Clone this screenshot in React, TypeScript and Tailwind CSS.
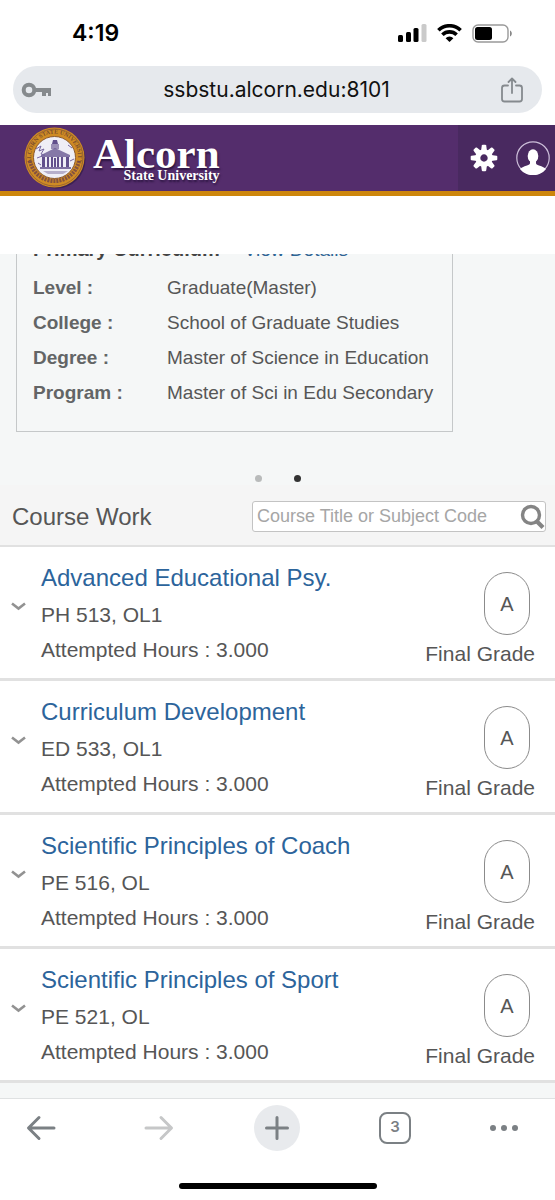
import { useState } from "react";

interface Course {
  title: string;
  code: string;
  hours: string;
  grade: string;
}

const COURSES: Course[] = [
  { title: "Advanced Educational Psy.", code: "PH 513, OL1", hours: "3.000", grade: "A" },
  { title: "Curriculum Development", code: "ED 533, OL1", hours: "3.000", grade: "A" },
  { title: "Scientific Principles of Coach", code: "PE 516, OL", hours: "3.000", grade: "A" },
  { title: "Scientific Principles of Sport", code: "PE 521, OL", hours: "3.000", grade: "A" },
];

const CURRICULUM = [
  { label: "Level", value: "Graduate(Master)" },
  { label: "College", value: "School of Graduate Studies" },
  { label: "Degree", value: "Master of Science in Education" },
  { label: "Program", value: "Master of Sci in Edu Secondary" },
];

function StatusBar() {
  return (
    <div className="flex h-[66px] items-center justify-between pr-[42px] pl-[72px] font-['Inter',sans-serif]">
      <span className="text-[23px] font-semibold text-black">4:19</span>
      <div className="flex items-center gap-[10px]">
        <svg width="29" height="18" viewBox="0 0 29 18" aria-hidden="true">
          <rect x="0" y="11" width="5" height="7" rx="1.5" />
          <rect x="8" y="8" width="5" height="10" rx="1.5" />
          <rect x="15.5" y="4" width="5" height="14" rx="1.5" />
          <rect x="23.5" y="0" width="5" height="18" rx="1.5" fill="#cacaca" />
        </svg>
        <svg width="25" height="18" viewBox="0 0 25 18" aria-hidden="true">
          <g fill="none" stroke="#000" strokeWidth="3.6">
            <path d="M1.400 6.200a16 16 0 0 1 22.200 0" />
            <path d="M5.400 10.800a10.200 10.200 0 0 1 14.200 0" />
          </g>
          <path d="M12.500 18 8.600 14.200a5.600 5.600 0 0 1 7.800 0z" />
        </svg>
        <svg width="41" height="19" viewBox="0 0 41 19" aria-hidden="true">
          <rect x="1" y="1" width="35" height="17" rx="5" fill="none" stroke="#999" strokeWidth="1.4" />
          <rect x="3" y="3" width="17" height="13" rx="2.5" />
          <path d="M38 6.500c2.400.8 2.400 5.200 0 6z" fill="#888" />
        </svg>
      </div>
    </div>
  );
}

function AddressBar() {
  return (
    <div className="mx-[13px] flex h-[47px] items-center justify-between rounded-full bg-[#e6e9ed] pr-[18px] pl-2">
      <svg width="32" height="18" viewBox="0 0 32 18" aria-hidden="true">
        <circle cx="8" cy="9" r="5.3" fill="none" stroke="#868a8d" strokeWidth="4" />
        <path d="M14 7h16v8h-3v-3h-2v3h-4v-4h-7z" fill="#868a8d" />
      </svg>
      <span className="font-['Inter',sans-serif] text-[21px] text-[#111]">ssbstu.alcorn.edu:8101</span>
      <button type="button" aria-label="Share">
        <svg
          width="24"
          height="26"
          viewBox="0 0 24 26"
          fill="none"
          stroke="#858a8e"
          strokeWidth="1.8"
          strokeLinecap="round"
          strokeLinejoin="round"
        >
          <path d="M8 8.500H4.500A2.500 2.500 0 0 0 2 11v11a2.500 2.500 0 0 0 2.500 2.500h15A2.500 2.500 0 0 0 22 22V11a2.500 2.500 0 0 0-2.500-2.500H16" />
          <path d="M12 16V2M8.500 5 12 1.500 15.500 5" />
        </svg>
      </button>
    </div>
  );
}

function Seal() {
  return (
    <svg width="62" height="62" viewBox="0 0 62 62" aria-hidden="true">
      <circle cx="32.500" cy="32.500" r="29" fill="#321b49" opacity="0.7" />
      <circle cx="30.500" cy="30.500" r="30" fill="#cf8b24" />
      <circle cx="30.500" cy="30.500" r="28.500" fill="none" stroke="#8c5b35" strokeWidth="0.8" />
      <circle cx="30.500" cy="30.500" r="21" fill="#efeef6" stroke="#8b5a2f" />
      <defs>
        <path id="seal-top" d="M7.500 35a23.500 23.500 0 1 1 46 0" />
      </defs>
      <text fontSize="6" fill="#7a4d2d" fontFamily="Liberation Serif, serif" fontWeight="bold">
        <textPath href="#seal-top" startOffset="50%" textAnchor="middle">
          ALCORN STATE UNIVERSITY
        </textPath>
      </text>
      <path d="M6 34a25 25 0 0 0 49 0" fill="none" stroke="#6b3f4a" strokeWidth="4" strokeDasharray="2 1" opacity="0.75" />
      <g fill="#62508c">
        <path d="M29 13h4l1 4h-6z" />
        <path d="M27 17h8v5h-8z" opacity="0.6" />
        <path d="M17 28 31 21l15 7v2H17z" opacity="0.75" />
        <path d="M18 30h3v10h-3zM23 30h2v10h-2zM27 30h2v10h-2zM33 30h2v10h-2zM37 30h2v10h-2zM42 30h3v10h-3z" />
        <path d="M16 40h31v2H16z" opacity="0.8" />
        <path d="M30 31h2v9h-2z" />
        <path d="M19 44h25l-5 3H24z" opacity="0.4" />
      </g>
      <path d="m12 22 5-3-2 5 5-2-3 5 4 1-8 3M44 18l4 3M46 34l4-2M14 36l3 2" fill="none" stroke="#7667a0" />
    </svg>
  );
}

function SiteHeader() {
  return (
    <header className="flex h-[71px] items-stretch justify-between border-b-[5px] border-[#cd860c] bg-[#542d6c]">
      <a href="#" aria-label="Alcorn State University" className="flex items-center gap-[7px] pl-6">
        <Seal />
        <span className="flex flex-col items-end pt-1 font-['Liberation_Serif',serif] font-bold text-white [text-shadow:1px_2px_2px_#2b1540]">
          <span className="text-[43px] leading-[31px]">Alcorn</span>
          <span className="text-[14px] leading-[14px]">State University</span>
        </span>
      </a>
      <div className="flex items-center gap-[18px] bg-[#492960] pr-[5px] pl-[12px]">
        <button type="button" aria-label="Settings">
          <svg width="28" height="28" viewBox="-14 -14 28 28" fill="#fff">
            {[0, 45, 90, 135, 180, 225, 270, 315].map((angle) => (
              <path key={angle} d="M-3-7-2.200-12.500q.2-.8 1-.8h2.400q.8 0 1 .8L3-7z" transform={`rotate(${angle})`} />
            ))}
            <circle r="6.200" fill="none" stroke="#fff" strokeWidth="5" />
          </svg>
        </button>
        <button type="button" aria-label="Profile">
          <svg width="34" height="34" viewBox="0 0 34 34">
            <circle cx="17" cy="17" r="16.200" fill="none" stroke="#cdbfda" strokeWidth="1.200" />
            <ellipse cx="17" cy="15" rx="5.300" ry="6.800" fill="#fff" />
            <path
              d="M14 19h6v3c0 1.400 1.200 1.900 3 2.500 3.500 1.100 5.700 2.200 7 3.400A16.500 16.500 0 0 1 4 27.900c1.300-1.200 3.500-2.300 7-3.400 1.800-.6 3-1.100 3-2.500z"
              fill="#fff"
            />
          </svg>
        </button>
      </div>
    </header>
  );
}

function CurriculumCard() {
  return (
    <section className="overflow-hidden bg-[#f5f7f7] pb-[3px]">
      <div className="-mt-[22px] mr-[102px] ml-4 border border-[#c5c8c9] px-4 pt-1 pb-[26px] text-[19px] leading-[25px]">
        <div className="flex gap-6">
          <h2 className="text-[20px] font-bold text-[#444]">Primary Curriculum</h2>
          <a href="#" className="text-[#2e6494]">
            View Details
          </a>
        </div>
        <dl className="pt-[3px]">
          {CURRICULUM.map((item) => (
            <div key={item.label} className="mt-[10px] flex">
              <dt className="w-[134px] shrink-0 font-bold text-[#636566]">{item.label} :</dt>
              <dd className="whitespace-nowrap">{item.value}</dd>
            </div>
          ))}
        </dl>
      </div>
      <div className="mt-[43px] flex justify-center gap-8">
        <button type="button" aria-label="Slide 1" className="size-[7px] rounded-full bg-[#b9bbbb]" />
        <button type="button" aria-label="Slide 2" className="size-[7px] rounded-full bg-[#333]" />
      </div>
    </section>
  );
}

function CourseRow({ course }: { course: Course }) {
  return (
    <li className="flex h-[134px] border-b-[3px] border-[#e1e1e1] bg-white pr-5">
      <button type="button" aria-label="Expand course" className="flex w-[41px] shrink-0 items-center pb-3 pl-[11px]">
        <svg width="15" height="9" viewBox="0 0 15 9" fill="none" stroke="#929292" strokeWidth="2.600">
          <path d="m1 1.500 6.500 5 6.500-5" />
        </svg>
      </button>
      <div className="flex-1 pt-[15px]">
        <a href="#" className="block text-[24px] leading-[32px] text-[#2c649b]">
          {course.title}
        </a>
        <p className="mt-[5px] text-[21px] leading-[32px]">{course.code}</p>
        <p className="mt-[3px] text-[21px] leading-[32px]">Attempted Hours : {course.hours}</p>
      </div>
      <div className="flex flex-col items-end pt-[25px]">
        <span className="mr-[5px] flex h-[63px] w-[46px] items-center justify-center rounded-[23px] border border-[#8b8b8b] text-[20px]">
          {course.grade}
        </span>
        <span className="mt-1 text-[21px] leading-[30px]">Final Grade</span>
      </div>
    </li>
  );
}

function CourseWork() {
  const [query, setQuery] = useState("");
  const term = query.toLowerCase();
  const courses = COURSES.filter((c) => `${c.title} ${c.code}`.toLowerCase().includes(term));

  return (
    <section>
      <div className="flex h-[62px] items-center justify-between border-b-2 border-[#e1e1e1] bg-[#f5f5f5] pt-[3px] pr-[9px] pl-3">
        <h2 className="text-[24px]">Course Work</h2>
        <div className="flex h-[31px] w-[294px] items-center rounded-[3px] border border-[#c3c3c3] bg-white pl-1">
          <input
            type="text"
            aria-label="Search courses"
            placeholder="Course Title or Subject Code"
            value={query}
            onChange={(e) => setQuery(e.target.value)}
            className="min-w-0 flex-1 bg-transparent text-[18px] outline-none placeholder:text-[#a6a6a6]"
          />
          <button type="button" aria-label="Search">
            <svg width="25" height="27" viewBox="0 0 25 27" fill="none" stroke="#848484">
              <circle cx="11" cy="12" r="8.500" strokeWidth="3.400" />
              <path d="m17 18.500 6 6" strokeWidth="4.200" />
            </svg>
          </button>
        </div>
      </div>
      <ul>
        {courses.map((course) => (
          <CourseRow key={course.code} course={course} />
        ))}
      </ul>
    </section>
  );
}

function BrowserToolbar() {
  return (
    <nav aria-label="Browser" className="border-t border-[#dfe1e2] bg-white">
      <div className="flex h-[57px] items-center justify-between pr-[37px] pl-[18px]">
        <button type="button" aria-label="Back" className="flex w-[46px] justify-center">
          <svg width="30" height="26" viewBox="0 0 30 26" fill="none" stroke="#7b8084" strokeWidth="3" strokeLinecap="round" strokeLinejoin="round">
            <path d="M28 13H3M13 2.500 2.500 13 13 23.500" />
          </svg>
        </button>
        <button type="button" aria-label="Forward" className="flex w-[46px] justify-center">
          <svg width="30" height="26" viewBox="0 0 30 26" fill="none" stroke="#c6c7c8" strokeWidth="3" strokeLinecap="round" strokeLinejoin="round">
            <path d="M2 13h25M17 2.500 27.500 13 17 23.500" />
          </svg>
        </button>
        <button type="button" aria-label="New tab" className="flex size-[46px] items-center justify-center rounded-full bg-[#e8eaed]">
          <svg width="26" height="26" viewBox="0 0 26 26" fill="none" stroke="#7b8084" strokeWidth="3" strokeLinecap="round">
            <path d="M13 2.500v21M2.500 13h21" />
          </svg>
        </button>
        <button type="button" aria-label="Open tabs" className="flex w-[46px] justify-center">
          <span className="flex size-8 items-center justify-center rounded-lg border-2 border-[#7b8084] font-['Inter',sans-serif] text-[15px] font-semibold text-[#7b8084]">
            3
          </span>
        </button>
        <button type="button" aria-label="More">
          <svg width="28" height="8" viewBox="1 0 28 8" fill="#7b8084">
            <circle cx="4" cy="4" r="3" />
            <circle cx="15" cy="4" r="3" />
            <circle cx="26" cy="4" r="3" />
          </svg>
        </button>
      </div>
      <div className="mx-auto mt-[27px] mb-[11px] h-[6px] w-[198px] rounded-full bg-black" />
    </nav>
  );
}

export default function App() {
  return (
    <div className="min-h-screen bg-white font-['Liberation_Sans',Arial,sans-serif] text-[#565656]">
      <StatusBar />
      <AddressBar />
      <div className="mt-3 mb-[58px]">
        <SiteHeader />
      </div>
      <main className="bg-[#f5f7f7] pb-[15px]">
        <CurriculumCard />
        <CourseWork />
      </main>
      <BrowserToolbar />
    </div>
  );
}
